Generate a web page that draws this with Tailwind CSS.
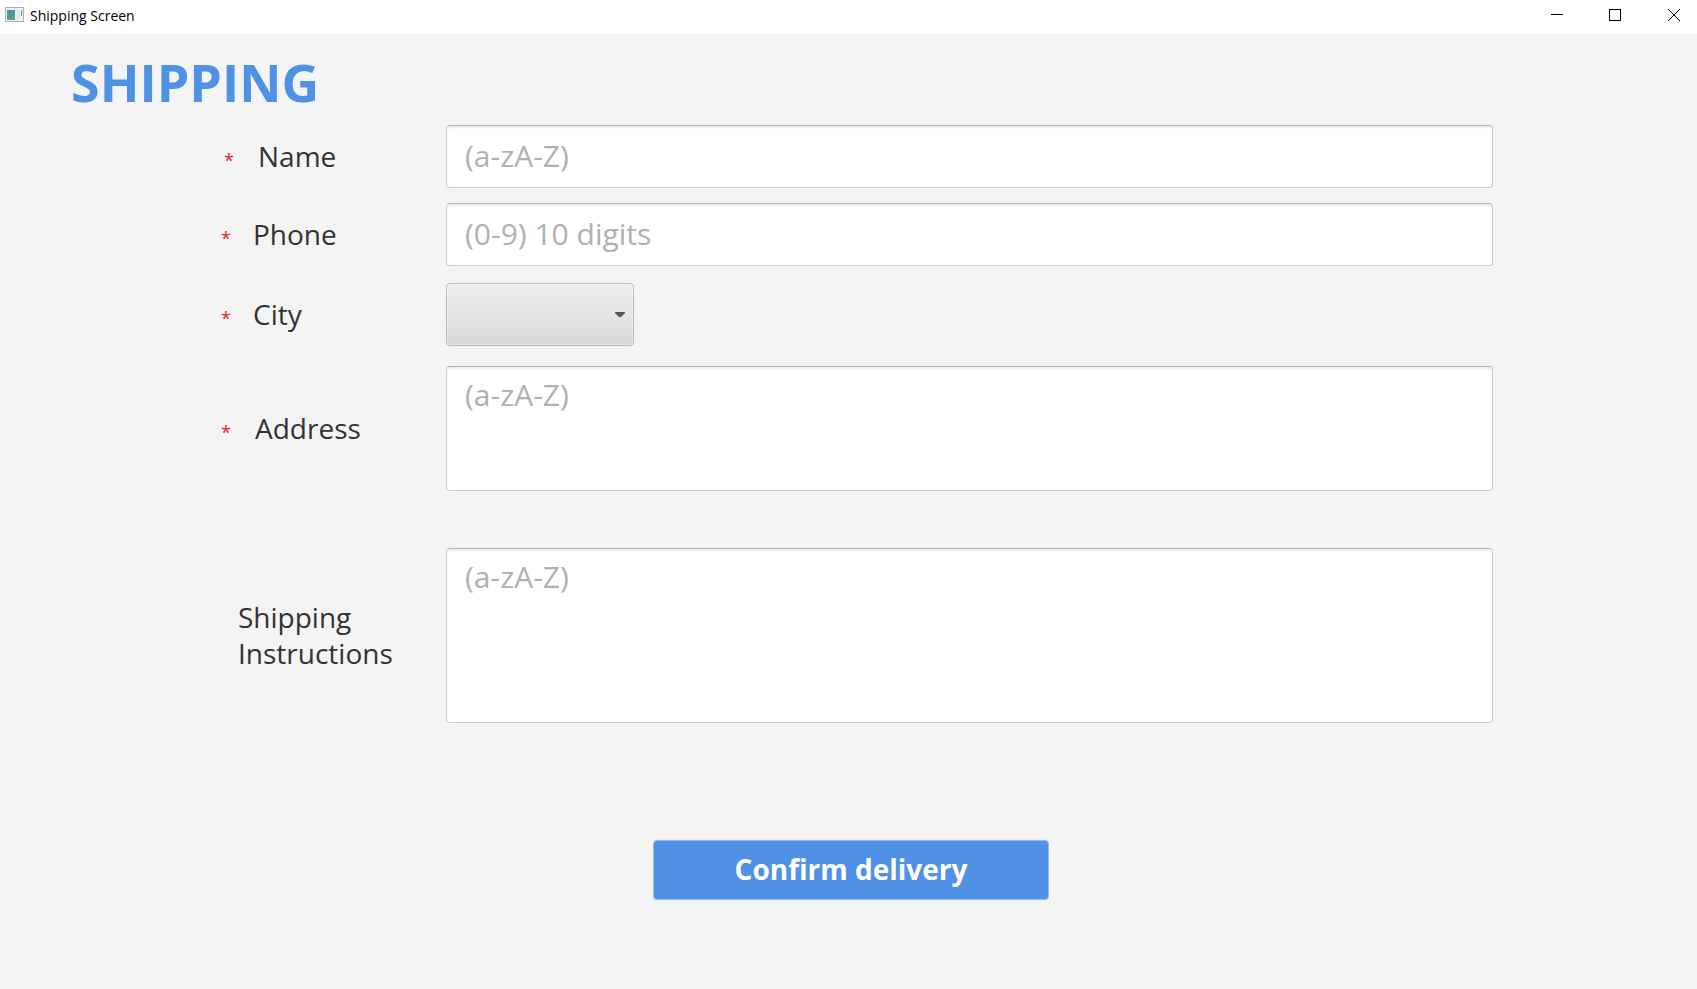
<!DOCTYPE html>
<html lang="en">
<head>
<meta charset="utf-8">
<title>Shipping Screen</title>
<script src="https://cdn.jsdelivr.net/npm/@tailwindcss/browser@4"></script>
</head>
<body class="min-h-screen bg-[#f4f4f4] font-['Open_Sans','Noto_Sans',sans-serif] text-[#333333]">
<header class="flex h-[34px] items-center bg-white pb-1 pl-[5px] text-black">
  <svg class="h-4 w-5 shrink-0" viewBox="0 0 20 16" aria-hidden="true">
    <defs><linearGradient id="pane" x1="0" y1="0" x2="0" y2="1"><stop offset="0" stop-color="#4a8fae"/><stop offset="1" stop-color="#5ba487"/></linearGradient></defs>
    <rect x=".5" y=".5" width="18" height="14" fill="#f2f4f4" stroke="#aab0b6"/>
    <rect x="2" y="3" width="8" height="10" fill="url(#pane)"/>
    <rect x="11" y="3" width="4" height="10" fill="#e6e9ea"/>
    <rect x="16" y="3" width="1" height="6" fill="#4f9a94"/>
  </svg>
  <span class="pl-[5px] pt-px text-[14px] leading-5">Shipping Screen</span>
  <div class="ml-auto flex h-full">
    <button type="button" aria-label="Minimize" class="flex w-[58px] items-center justify-center"><svg class="h-3 w-3" viewBox="0 0 12 12" shape-rendering="crispEdges"><path d="M0 5.5H12" stroke="#000"/></svg></button>
    <button type="button" aria-label="Maximize" class="flex w-[58px] items-center justify-center"><svg class="h-3 w-3" viewBox="0 0 12 12" fill="none" shape-rendering="crispEdges"><rect x=".5" y=".5" width="11" height="11" stroke="#000"/></svg></button>
    <button type="button" aria-label="Close" class="flex w-[53px] items-center justify-end pr-[17px]"><svg class="h-3 w-3" viewBox="0 0 12 12"><path d="M0 0L12 12M12 0L0 12" stroke="#000"/></svg></button>
  </div>
</header>
<main>
  <h1 class="h-[91px] pl-[71px] pt-[13px] text-[52px] leading-[70px] font-bold text-[#4f91e5]">SHIPPING</h1>
  <form class="flex flex-col pr-[204px]">
    <div class="flex items-center">
      <div class="flex w-[446px] shrink-0 items-center pb-px pl-[224px]">
        <span class="w-[34px] pt-2 text-[18px] text-[#d9252b]">*</span>
        <label for="name" class="text-[28px] leading-9">Name</label>
      </div>
      <input id="name" type="text" placeholder="(a-zA-Z)" class="h-[63px] min-w-0 flex-1 rounded-[4px] border border-[#cbcbcb] border-t-[#b5b5b5] bg-white px-[18px] pb-[3px] text-[30px] shadow-[inset_0_2px_2px_#eeeeee] placeholder:text-[#b0b0b0] outline-none">
    </div>
    <div class="mt-[15px] flex items-center">
      <div class="flex w-[446px] shrink-0 items-center pb-px pl-[221px]">
        <span class="w-8 pt-2 text-[18px] text-[#d9252b]">*</span>
        <label for="phone" class="text-[28px] leading-9">Phone</label>
      </div>
      <input id="phone" type="tel" placeholder="(0-9) 10 digits" class="h-[63px] min-w-0 flex-1 rounded-[4px] border border-[#cbcbcb] border-t-[#b5b5b5] bg-white px-[18px] pb-[3px] text-[30px] shadow-[inset_0_2px_2px_#eeeeee] placeholder:text-[#b0b0b0] outline-none">
    </div>
    <div class="mt-[17px] flex items-center">
      <div class="flex w-[446px] shrink-0 items-center pb-px pl-[221px]">
        <span class="w-8 pt-2 text-[18px] text-[#d9252b]">*</span>
        <label for="city" class="text-[28px] leading-9">City</label>
      </div>
      <div class="relative h-[63px] w-[188px]">
        <select id="city" class="h-full w-full appearance-none rounded-[4px] border border-[#b9b9b9] bg-linear-to-b from-[#efefef] to-[#d9d9d9] px-[18px] text-[28px] shadow-[inset_0_0_0_1px_#ffffff66] outline-none"><option value=""></option></select>
        <svg class="pointer-events-none absolute top-7 right-[9px] h-[6px] w-[10px]" viewBox="0 0 10 6" aria-hidden="true"><path d="M0 1H10V2L6 6H4L0 2Z" fill="#555"/></svg>
      </div>
    </div>
    <div class="mt-5 flex items-center">
      <div class="flex w-[446px] shrink-0 items-center pb-px pl-[221px]">
        <span class="w-[34px] pt-2 text-[18px] text-[#d9252b]">*</span>
        <label for="address" class="text-[28px] leading-9">Address</label>
      </div>
      <textarea id="address" placeholder="(a-zA-Z)" class="h-[125px] min-w-0 flex-1 resize-none rounded-[4px] border border-[#cbcbcb] border-t-[#b5b5b5] bg-white px-[18px] py-2 text-[30px] leading-10 shadow-[inset_0_2px_2px_#eeeeee] placeholder:text-[#b0b0b0] outline-none"></textarea>
    </div>
    <div class="mt-[57px] flex items-center">
      <div class="w-[446px] shrink-0 pb-px pl-[238px]">
        <label for="instructions" class="block w-min text-[28px] leading-9">Shipping Instructions</label>
      </div>
      <textarea id="instructions" placeholder="(a-zA-Z)" class="h-[175px] min-w-0 flex-1 resize-none rounded-[4px] border border-[#cbcbcb] border-t-[#b5b5b5] bg-white px-[18px] py-2 text-[30px] leading-10 shadow-[inset_0_2px_2px_#eeeeee] placeholder:text-[#b0b0b0] outline-none"></textarea>
    </div>
    <button type="submit" class="mt-[117px] ml-[653px] h-[60px] w-[396px] rounded-[4px] border border-[#8ebcf5] bg-[#4f91e5] pb-[2px] text-[28px] font-bold text-white">Confirm delivery</button>
  </form>
</main>
</body>
</html>
